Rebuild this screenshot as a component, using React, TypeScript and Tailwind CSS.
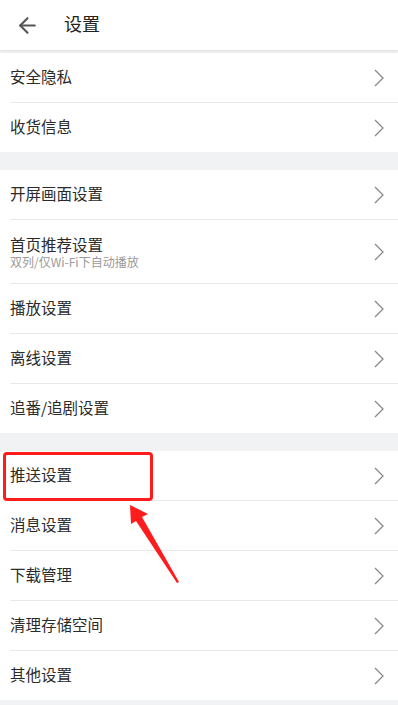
import React from 'react';
import { ArrowLeft } from 'lucide-react';

type Item = { title: string; sub?: string };

const groups: Item[][] = [
  [{ title: '安全隐私' }, { title: '收货信息' }],
  [
    { title: '开屏画面设置' },
    { title: '首页推荐设置', sub: '双列/仅Wi-Fi下自动播放' },
    { title: '播放设置' },
    { title: '离线设置' },
    { title: '追番/追剧设置' },
  ],
  [
    { title: '推送设置' },
    { title: '消息设置' },
    { title: '下载管理' },
    { title: '清理存储空间' },
    { title: '其他设置' },
  ],
];

const Chevron = () => (
  <svg width="10" height="18" viewBox="0 0 10 18" fill="none" className="shrink-0">
    <polyline points="1,1 9,9 1,17" stroke="#8a8a8a" strokeWidth="1.3" strokeLinejoin="miter" />
  </svg>
);

const Row = ({ item, last }: { item: Item; last: boolean }) => (
  <div className="pl-[10px] bg-white">
    <div
      className={`flex items-center justify-between pr-[14px] ${
        item.sub ? 'h-[64px]' : last ? 'h-[49px]' : 'h-[50px]'
      } ${last ? '' : 'border-b border-[#e9e9eb]'}`}
    >
      <div className={`flex flex-col ${item.sub ? '' : 'pb-[3px]'}`}>
        <span className="text-[15.5px] leading-[20px] text-[#2b2b2b]">{item.title}</span>
        {item.sub && <span className="text-[12px] leading-[15px] text-[#9a9a9a]">{item.sub}</span>}
      </div>
      <Chevron />
    </div>
  </div>
);

export default function App() {
  return (
    <div
      className="relative w-[398px] h-[705px] overflow-hidden bg-[#f1f2f4]"
      style={{ fontFamily: '"Noto Sans CJK SC", "Noto Sans", sans-serif' }}
    >
      {/* Header */}
      <div className="relative z-10 h-[50px] bg-white flex items-center shadow-[0_1px_3px_rgba(0,0,0,0.08)]">
        <ArrowLeft className="ml-[15px] w-[25px] h-[25px] text-[#555]" strokeWidth={2} />
        <span className="ml-[24px] pb-[4px] text-[18px] text-[#222]">设置</span>
      </div>

      <div className="pt-[3px] flex flex-col gap-[18px]">
        {groups.map((g, gi) => (
          <div key={gi} className="bg-white">
            {g.map((item, i) => (
              <Row key={item.title} item={item} last={i === g.length - 1} />
            ))}
          </div>
        ))}
      </div>

      {/* highlight annotation */}
      <div className="absolute left-[3px] top-[452px] w-[150px] h-[49px] border-[3px] border-[#ff1c1c] rounded-[4px]" />
      <svg className="absolute left-0 top-0" width="398" height="705" viewBox="0 0 398 705">
        <polygon points="130,505 148,514 142,517 179,582 177,583 136,521 131,524" fill="#ff1c1c" />
      </svg>
    </div>
  );
}
